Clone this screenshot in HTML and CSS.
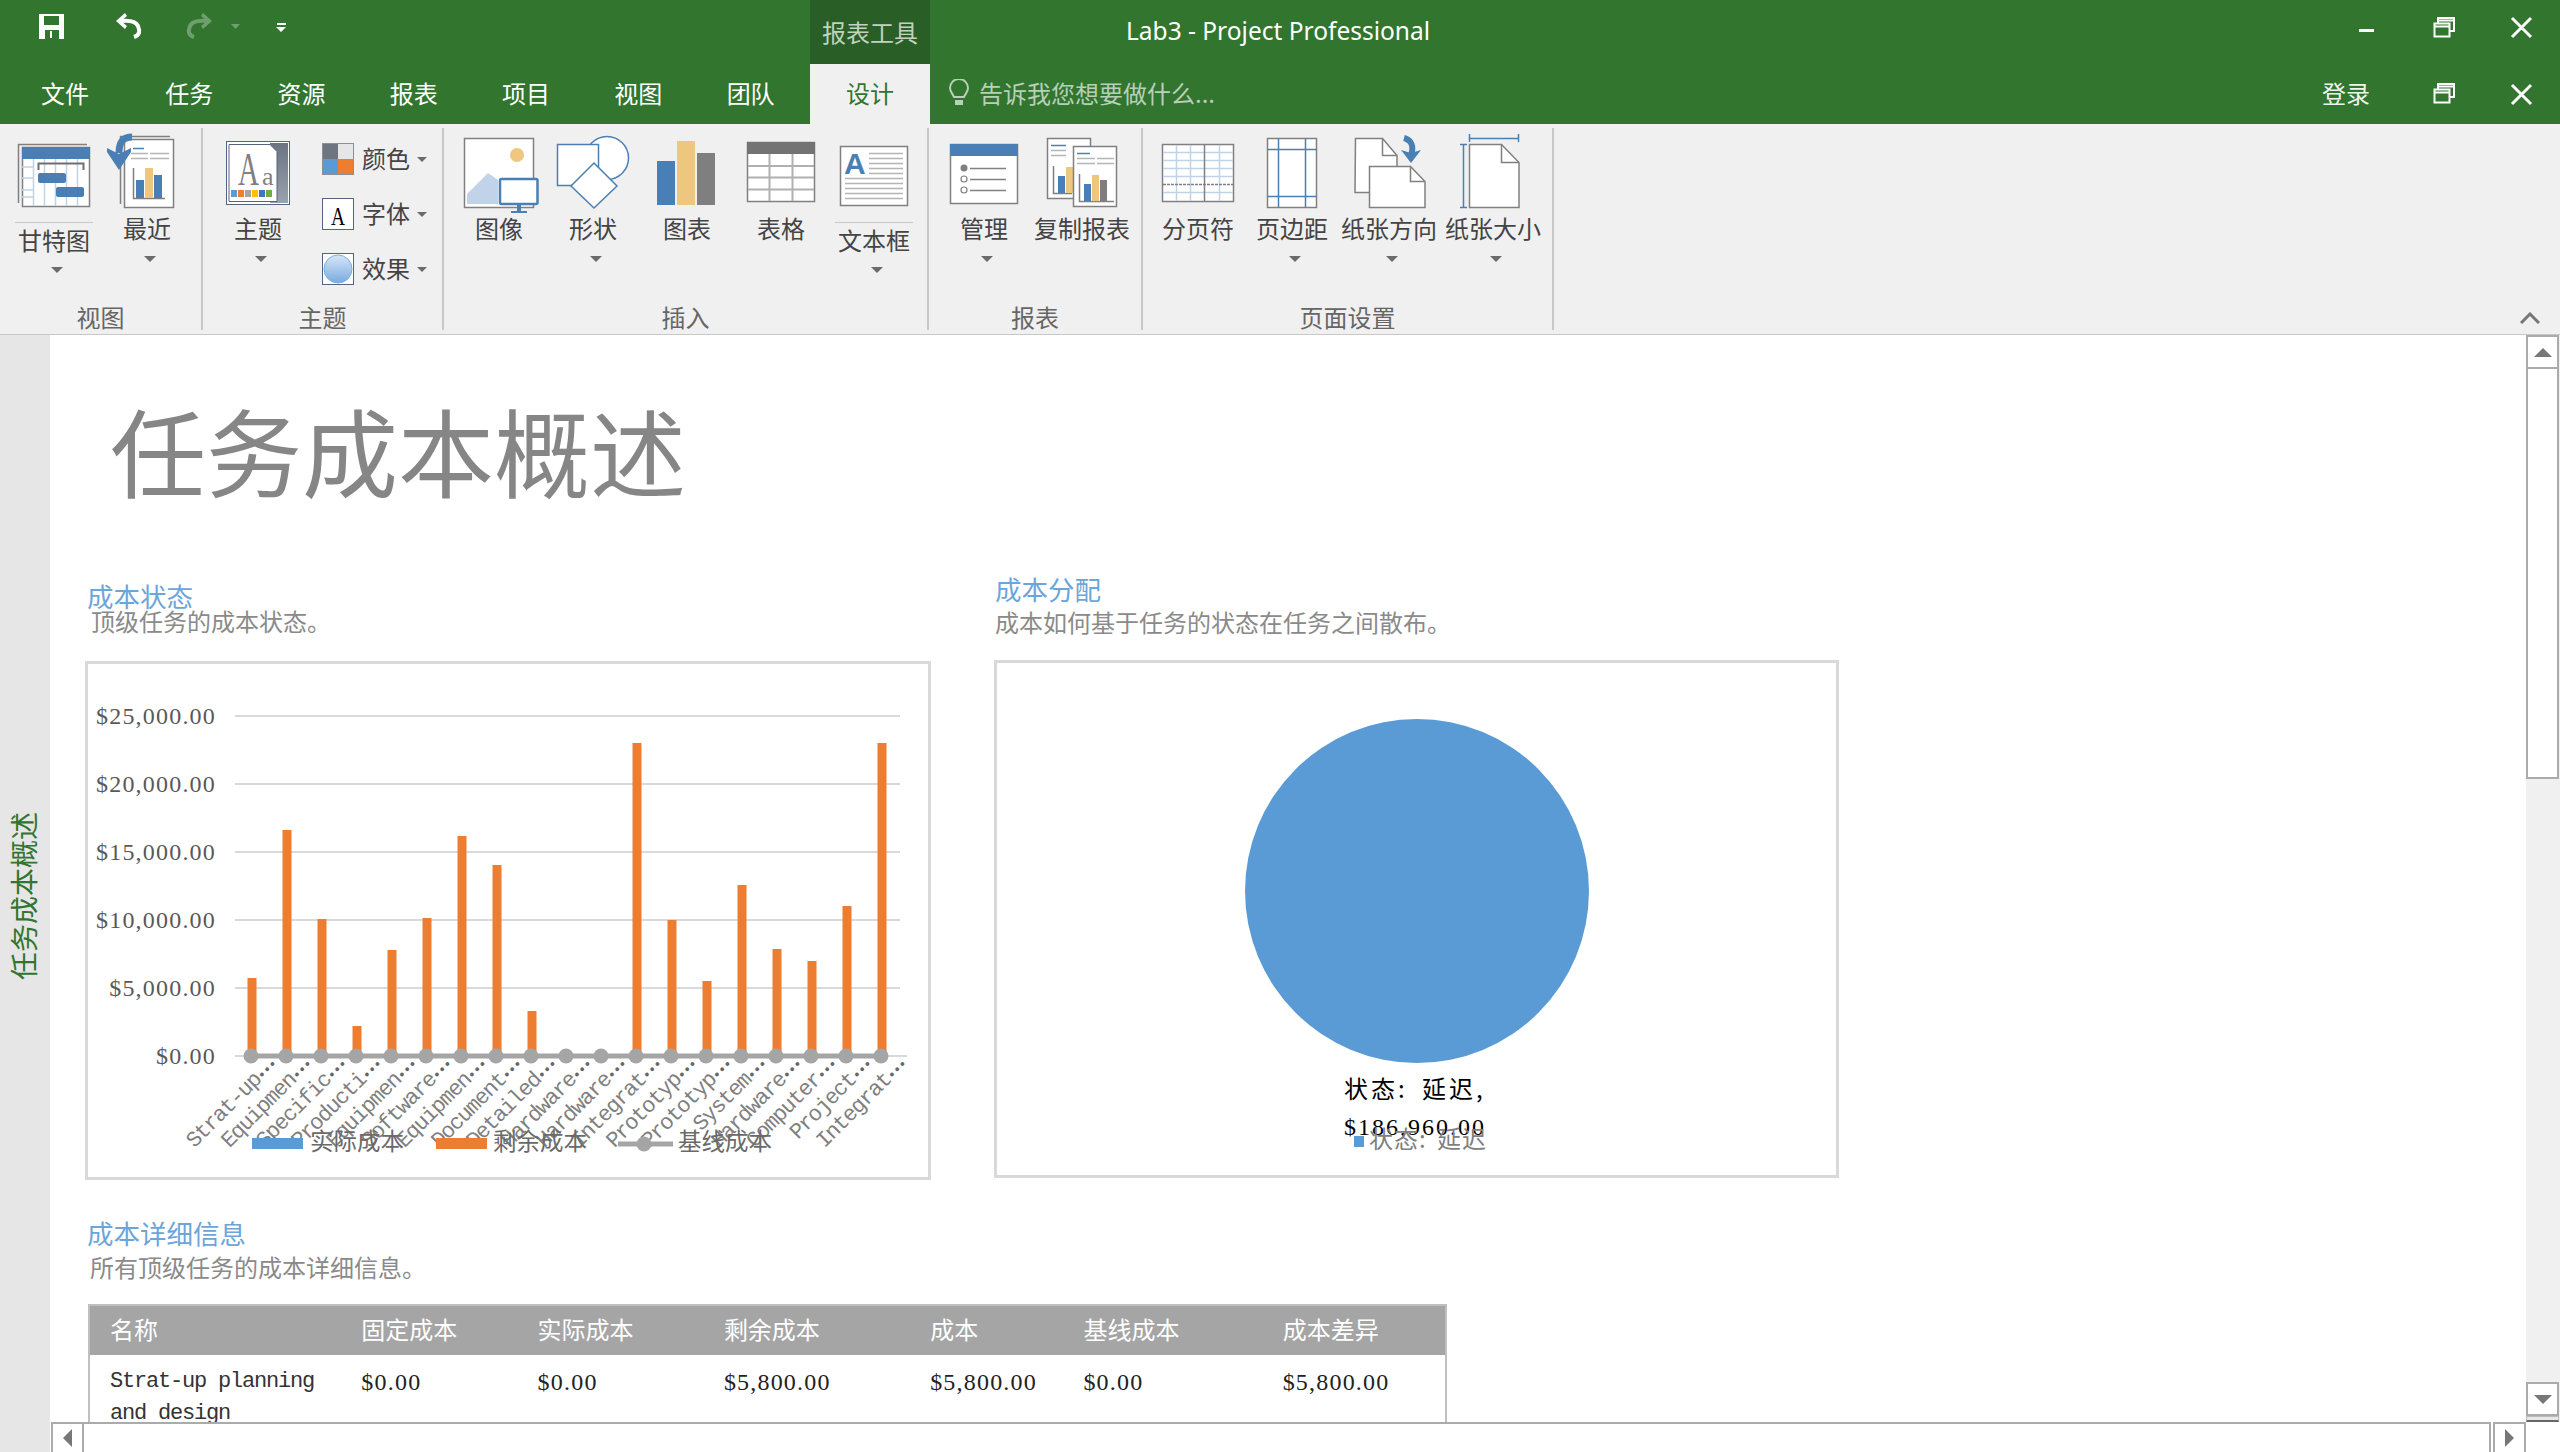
FILE: index.html
```html
<!DOCTYPE html>
<html lang="zh-CN">
<head>
<meta charset="utf-8">
<title>Lab3 - Project Professional</title>
<link rel="stylesheet" href="styles.css">
</head>
<body>
<div class="app">
  <header class="chrome">
    <div class="titlebar">
      <svg class="qat" viewBox="0 0 810 64" width="810" height="64">
        <path class="w" fill-rule="evenodd" d="M39 14h25v25H39z M44 16v9h15v-9z M45 30v9h14v-9z"/>
        <path class="w" d="M50 31h2v7h-2z"/>
        <path class="ws" d="M134 37c6-2 6-6 4-11-2-4-8-6-17-5"/>
        <path class="w" d="M116 21l9-8 2 3-6 5 6 5-2 3z"/>
        <g opacity=".3">
          <path class="ws" d="M194 37c-6-2-6-6-4-11 2-4 8-6 17-5"/>
          <path class="w" d="M212 21l-9-8-2 3 6 5-6 5 2 3z"/>
          <path class="w" d="M231 24h9l-4.500 5z"/>
        </g>
        <path class="w" d="M277 23h9v2h-9z M276 27h10l-5 5z"/>
      </svg>
      <div class="ctx-label">报表工具</div>
      <div class="doc-title">Lab3 - Project Professional</div>
      <svg class="wnd" viewBox="2330 0 230 64" width="230" height="64">
        <path class="w" d="M2359 29h15v3h-15z"/>
        <path class="wl" d="M2438 23v-5h16v13h-4"/><path class="wl" d="M2438 20.500h16"/><rect class="wl" x="2434.500" y="23.500" width="15" height="13"/><path class="wl" d="M2434.500 26.500h15"/>
        <path class="wx" d="M2512 18l19 19M2531 18l-19 19"/>
      </svg>
    </div>
    <nav class="tabs">
      <div class="tab tab-file">文件</div>
      <div class="tab">任务</div>
      <div class="tab">资源</div>
      <div class="tab">报表</div>
      <div class="tab">项目</div>
      <div class="tab">视图</div>
      <div class="tab">团队</div>
      <div class="tab tab-active">设计</div>
      <div class="tell">
        <svg class="bulb" viewBox="0 0 20 28" width="20" height="28"><path d="M5 18c-1-3-4-5-4-9a9 9 0 0 1 18 0c0 4-3 6-4 9z" fill="none" stroke="#b9cfb8" stroke-width="2"/><path d="M6 21h8v5H6z" fill="#b9cfb8"/></svg>
        <span>告诉我您想要做什么...</span>
      </div>
      <div class="login">登录</div>
      <svg class="wnd2" viewBox="2420 64 140 60" width="140" height="60">
        <path class="wl" d="M2438 89v-5h16v13h-4"/><path class="wl" d="M2438 86.500h16"/><rect class="wl" x="2434.500" y="89.500" width="15" height="13"/><path class="wl" d="M2434.500 92.500h15"/>
        <path class="wx" d="M2512 85l19 19M2531 85l-19 19"/>
      </svg>
    </nav>
  </header>

  <section class="ribbon">
    <div class="group g1">
      <div class="items">
        <div class="btn b78 split">
          <svg class="ic" viewBox="15 128 78 86" width="78" height="86">
            <path class="gl" d="M18.500 203V144.500H87"/>
            <rect class="sheet" x="22.500" y="147.500" width="67" height="59"/>
            <path class="lb" d="M33.500 159v47M44.500 159v47M55.500 159v47M66.500 159v47M77.500 159v47M22 167h11M22 178h11M22 190h11M22 197h11"/>
            <rect class="bl" x="22" y="147" width="68" height="12"/>
            <path class="gd" d="M38.500 170v-6.500h45v6.500"/>
            <rect class="bl" x="38" y="173" width="28" height="10" rx="2"/>
            <rect class="bl" x="56" y="187" width="28" height="10" rx="2"/>
          </svg>
          <div class="lbl">甘特图</div><i class="caret"></i>
        </div>
        <div class="btn b80">
          <svg class="ic" viewBox="107 128 80 86" width="80" height="86">
            <path class="gl" d="M120.500 204V136.500H170"/>
            <rect class="sheet" x="124.500" y="139.500" width="49" height="68"/>
            <path class="bls" d="M133 148.500h11"/>
            <path class="lg" d="M131 153.500h17M150 153.500h19M131 158.500h17M150 158.500h19"/>
            <path class="gl" d="M133.500 168v30.500H165"/>
            <rect class="bl" x="136" y="180" width="8" height="18"/><rect class="tn" x="145" y="168" width="8" height="30"/><rect class="bl" x="154" y="175" width="8" height="23"/>
            <path d="M132 137c-9 0-13 5-13 16" fill="none" stroke="#4a7fb5" stroke-width="7"/>
            <path class="bl" d="M107 148l12 6 12-6v4l-12 18-12-18z"/>
          </svg>
          <div class="lbl">最近</div><i class="caret"></i>
        </div>
      </div>
      <div class="glabel">视图</div>
    </div>

    <div class="group g2">
      <div class="items">
        <div class="btn b80">
          <svg class="ic" viewBox="218 128 80 86" width="80" height="86">
            <defs><linearGradient id="th" x1="0" y1="0" x2="0" y2="1"><stop offset="0" stop-color="#6b7380"/><stop offset="1" stop-color="#9aa2ae"/></linearGradient>
            <linearGradient id="ef" x1="0" y1="0" x2="0" y2="1"><stop offset="0" stop-color="#d6e6f7"/><stop offset="1" stop-color="#7aaae0"/></linearGradient></defs>
            <rect x="226.500" y="141.500" width="63" height="63" fill="#fff" stroke="#546380"/>
            <rect x="270" y="143" width="18" height="60" fill="url(#th)"/>
            <path d="M229 144.500h41l7 7v50h-48z" fill="#fff" stroke="#546380"/>
            <text class="aa" x="238" y="185" textLength="21" lengthAdjust="spacingAndGlyphs">A</text><text class="aa2" x="262" y="185">a</text>
            <rect x="231" y="190" width="6" height="7" fill="#5b9bd5"/><rect x="238" y="190" width="6" height="7" fill="#ed7d31"/><rect x="245" y="190" width="6" height="7" fill="#a5a5a5"/><rect x="252" y="190" width="6" height="7" fill="#ffc000"/><rect x="259" y="190" width="6" height="7" fill="#4472c4"/><rect x="266" y="190" width="6" height="7" fill="#70ad47"/>
          </svg>
          <div class="lbl">主题</div><i class="caret"></i>
        </div>
        <div class="small-col">
          <div class="small">
            <svg viewBox="0 0 32 32" width="32" height="32"><rect width="16" height="16" fill="#6f7580"/><rect x="16" width="16" height="16" fill="#e6e6e6"/><rect y="16" width="16" height="16" fill="#5b9bd5"/><rect x="16" y="16" width="16" height="16" fill="#ed7d31"/><rect x=".5" y=".5" width="31" height="31" fill="none" stroke="#8a8f98"/></svg>
            <span>颜色</span><i class="caret-s"></i>
          </div>
          <div class="small">
            <svg viewBox="0 0 32 32" width="32" height="32"><rect x=".5" y=".5" width="31" height="31" fill="#fff" stroke="#546380"/><text class="fa" x="9" y="27" textLength="14" lengthAdjust="spacingAndGlyphs">A</text></svg>
            <span>字体</span><i class="caret-s"></i>
          </div>
          <div class="small">
            <svg viewBox="0 0 32 32" width="32" height="32"><rect x=".5" y=".5" width="31" height="31" fill="#fff" stroke="#546380"/><circle cx="16" cy="16" r="14" fill="url(#ef)" stroke="#7faee0"/></svg>
            <span>效果</span><i class="caret-s"></i>
          </div>
        </div>
      </div>
      <div class="glabel">主题</div>
    </div>

    <div class="group g3">
      <div class="items">
        <div class="btn b80">
          <svg class="ic" viewBox="459 128 80 86" width="80" height="86">
            <rect class="sheet" x="464.500" y="138.500" width="69" height="69"/>
            <circle cx="517" cy="155" r="7" fill="#efc77f"/>
            <path d="M467 194l21-21 10 7v24h-31z" fill="#c0d3e8"/>
            <rect x="500" y="179" width="37.500" height="25" rx="1.500" fill="#fff" stroke="#4a7fb5" stroke-width="2.500"/>
            <path class="bl" d="M517 205h4v6h6v2h-16v-2h6z"/>
          </svg>
          <div class="lbl">图像</div>
        </div>
        <div class="btn b80">
          <svg class="ic" viewBox="553 128 80 86" width="80" height="86">
            <circle class="sh" cx="607" cy="158" r="21.500"/>
            <rect class="sh" x="557.500" y="144.500" width="41" height="41"/>
            <path class="sh" d="M594 163l23 23-23 22-23-22z"/>
          </svg>
          <div class="lbl">形状</div><i class="caret"></i>
        </div>
        <div class="btn b80">
          <svg class="ic" viewBox="647 128 80 86" width="80" height="86">
            <rect class="bl" x="657" y="161" width="18" height="44"/><rect class="tn" x="677" y="141" width="18" height="64"/><rect x="697" y="153" width="18" height="52" fill="#7f7f7f"/>
          </svg>
          <div class="lbl">图表</div>
        </div>
        <div class="btn b80">
          <svg class="ic" viewBox="741 128 80 86" width="80" height="86">
            <rect class="sheet" x="747.500" y="142.500" width="67" height="59"/>
            <path class="lg2" d="M769.500 154v47M792.500 154v47M748 166h66M748 177.500h66M748 189.500h66"/>
            <rect x="747" y="142" width="68" height="12" fill="#737373"/>
          </svg>
          <div class="lbl">表格</div>
        </div>
        <div class="btn b78 split">
          <svg class="ic" viewBox="835 128 78 86" width="78" height="86">
            <rect class="sheet" x="840.500" y="146.500" width="67" height="59"/>
            <text class="tba" x="844" y="174">A</text>
            <path class="lg" d="M869 153.500h34M869 158.500h34M869 163.500h34M869 168.500h34M869 173.500h34M845 178.500h58M845 183.500h58M845 188.500h58M845 193.500h58M845 198.500h58"/>
          </svg>
          <div class="lbl">文本框</div><i class="caret"></i>
        </div>
      </div>
      <div class="glabel">插入</div>
    </div>

    <div class="group g4">
      <div class="items">
        <div class="btn b80">
          <svg class="ic" viewBox="944 128 80 86" width="80" height="86">
            <rect class="sheet" x="950.500" y="144.500" width="67" height="59"/>
            <rect class="bl" x="950" y="144" width="68" height="12"/>
            <circle cx="964" cy="168" r="3.500" fill="#7f7f7f"/><circle class="hol" cx="964" cy="179" r="3"/><circle class="hol" cx="964" cy="190" r="3"/>
            <path class="gl" d="M970 168.500h36M970 179.500h36M970 190.500h36"/>
          </svg>
          <div class="lbl">管理</div><i class="caret"></i>
        </div>
        <div class="btn b100">
          <svg class="ic" viewBox="1032 128 100 86" width="100" height="86">
            <rect class="sheet" x="1047.500" y="138.500" width="43" height="60"/>
            <path class="bls" d="M1051 145.500h15"/><path class="lg" d="M1051 150.500h15M1051 155.500h15"/>
            <path class="gl" d="M1053.500 166v27.500H1072"/>
            <rect class="bl" x="1058" y="176" width="7" height="17"/><rect class="tn" x="1066" y="167" width="7" height="26"/>
            <rect class="sheet" x="1073.500" y="146.500" width="43" height="60"/>
            <path class="bls" d="M1077 153.500h13"/><path class="lg" d="M1077 158.500h18M1097 158.500h17M1077 163.500h18M1097 163.500h17"/>
            <path class="gl" d="M1079.500 174v27.500H1114"/>
            <rect class="bl" x="1084" y="184" width="7" height="17"/><rect class="tn" x="1092" y="175" width="7" height="26"/><rect x="1100" y="180" width="7" height="21" fill="#7f7f7f"/>
          </svg>
          <div class="lbl">复制报表</div>
        </div>
      </div>
      <div class="glabel">报表</div>
    </div>

    <div class="group g5">
      <div class="items">
        <div class="btn b80">
          <svg class="ic" viewBox="1158 128 80 86" width="80" height="86">
            <rect class="sheet" x="1162.500" y="144.500" width="71" height="57"/>
            <path class="lb" d="M1176.500 145v56M1190.500 145v56M1219.500 145v56M1163 152.500h70M1163 160.500h70M1163 168.500h70M1163 176.500h70M1163 192.500h70"/>
            <path class="gl" d="M1204.500 145v56"/>
            <path class="gl" stroke-dasharray="3 1" d="M1163 184.500h70"/>
          </svg>
          <div class="lbl">分页符</div>
        </div>
        <div class="btn b80">
          <svg class="ic" viewBox="1252 128 80 86" width="80" height="86">
            <rect class="sheet" x="1267.500" y="138.500" width="49" height="69"/>
            <path class="bls" d="M1278.500 139v68M1305.500 139v68M1268 149.500h48M1268 196.500h48"/>
          </svg>
          <div class="lbl">页边距</div><i class="caret"></i>
        </div>
        <div class="btn b100">
          <svg class="ic" viewBox="1339 128 100 86" width="100" height="86">
            <path class="sheet" d="M1355.500 138.500h27l14.500 17v37h-42z"/><path class="gl" d="M1382.500 139v16.500h14"/>
            <path class="sheet" d="M1369.500 166.500h41l14.500 15v26h-55.500z"/><path class="gl" d="M1410.500 167v14.500h14"/>
            <path d="M1404 138c8 2 10 9 7 17" fill="none" stroke="#4a7fb5" stroke-width="6"/>
            <path class="bl" d="M1401 150l10 3 10-3-10 13z"/>
          </svg>
          <div class="lbl">纸张方向</div><i class="caret"></i>
        </div>
        <div class="btn b100">
          <svg class="ic" viewBox="1443 128 100 86" width="100" height="86">
            <path class="sheet" d="M1469.500 144.500h32l17.500 18v45h-49.500z"/><path class="gl" d="M1501.500 145v17.500h17"/>
            <path class="bls" d="M1469.500 134v8M1518.500 134v8M1470 138.500h48M1460 144.500h7M1460 207.500h7M1463.500 145v62"/>
          </svg>
          <div class="lbl">纸张大小</div><i class="caret"></i>
        </div>
      </div>
      <div class="glabel">页面设置</div>
    </div>

    <svg class="collapse" viewBox="0 0 20 12" width="20" height="12"><path d="M1 11l9-9 9 9" fill="none" stroke="#777" stroke-width="3"/></svg>
  </section>

  <div class="workspace">
    <aside class="viewbar"><span>任务成本概述</span></aside>
    <div class="pane">
      <main class="report">
        <h1 class="rtitle">任务成本概述</h1>
        <div class="charts">
          <section class="col col-a">
            <h2 class="head">成本状态</h2>
            <p class="sub">顶级任务的成本状态。</p>
            <div class="box">
              <svg viewBox="88 664 840 513" width="840" height="513">
                <path class="grid" d="M235 716h665M235 784h665M235 852h665M235 920h665M235 988h665M235 1056h672"/>
                <text class="yt" x="216" y="724">$25,000.00</text>
                <text class="yt" x="216" y="792">$20,000.00</text>
                <text class="yt" x="216" y="860">$15,000.00</text>
                <text class="yt" x="216" y="928">$10,000.00</text>
                <text class="yt" x="216" y="996">$5,000.00</text>
                <text class="yt" x="216" y="1064">$0.00</text>
                <g class="bars">
                  <rect x="247.500" y="978" width="9" height="78"/><rect x="282.500" y="830" width="9" height="226"/><rect x="317.500" y="919" width="9" height="137"/><rect x="352.500" y="1026" width="9" height="30"/><rect x="387.500" y="950" width="9" height="106"/><rect x="422.500" y="918" width="9" height="138"/><rect x="457.500" y="836" width="9" height="220"/><rect x="492.500" y="865" width="9" height="191"/><rect x="527.500" y="1011" width="9" height="45"/><rect x="632.500" y="743" width="9" height="313"/><rect x="667.500" y="920" width="9" height="136"/><rect x="702.500" y="981" width="9" height="75"/><rect x="737.500" y="885" width="9" height="171"/><rect x="772.500" y="949" width="9" height="107"/><rect x="807.500" y="961" width="9" height="95"/><rect x="842.500" y="906" width="9" height="150"/><rect x="877.500" y="743" width="9" height="313"/>
                </g>
                <path class="base" d="M251 1056h630"/>
                <g class="dots">
                  <circle cx="251" cy="1056" r="7.500"/><circle cx="286" cy="1056" r="7.500"/><circle cx="321" cy="1056" r="7.500"/><circle cx="356" cy="1056" r="7.500"/><circle cx="391" cy="1056" r="7.500"/><circle cx="426" cy="1056" r="7.500"/><circle cx="461" cy="1056" r="7.500"/><circle cx="496" cy="1056" r="7.500"/><circle cx="531" cy="1056" r="7.500"/><circle cx="566" cy="1056" r="7.500"/><circle cx="601" cy="1056" r="7.500"/><circle cx="636" cy="1056" r="7.500"/><circle cx="671" cy="1056" r="7.500"/><circle cx="706" cy="1056" r="7.500"/><circle cx="741" cy="1056" r="7.500"/><circle cx="776" cy="1056" r="7.500"/><circle cx="811" cy="1056" r="7.500"/><circle cx="846" cy="1056" r="7.500"/><circle cx="881" cy="1056" r="7.500"/>
                </g>
                <g class="xt" transform="translate(4 -3)">
                  <text transform="rotate(-45 274 1068)" x="274" y="1068">Strat-up<tspan class="el">•••</tspan></text>
                  <text transform="rotate(-45 309 1068)" x="309" y="1068">Equipmen<tspan class="el">•••</tspan></text>
                  <text transform="rotate(-45 344 1068)" x="344" y="1068">Specific<tspan class="el">•••</tspan></text>
                  <text transform="rotate(-45 379 1068)" x="379" y="1068">Producti<tspan class="el">•••</tspan></text>
                  <text transform="rotate(-45 414 1068)" x="414" y="1068">Equipmen<tspan class="el">•••</tspan></text>
                  <text transform="rotate(-45 449 1068)" x="449" y="1068">Software<tspan class="el">•••</tspan></text>
                  <text transform="rotate(-45 484 1068)" x="484" y="1068">Equipmen<tspan class="el">•••</tspan></text>
                  <text transform="rotate(-45 519 1068)" x="519" y="1068">Document<tspan class="el">•••</tspan></text>
                  <text transform="rotate(-45 554 1068)" x="554" y="1068">Detailed<tspan class="el">•••</tspan></text>
                  <text transform="rotate(-45 589 1068)" x="589" y="1068">Hardware<tspan class="el">•••</tspan></text>
                  <text transform="rotate(-45 624 1068)" x="624" y="1068">Hardware<tspan class="el">•••</tspan></text>
                  <text transform="rotate(-45 659 1068)" x="659" y="1068">Integrat<tspan class="el">•••</tspan></text>
                  <text transform="rotate(-45 694 1068)" x="694" y="1068">Prototyp<tspan class="el">•••</tspan></text>
                  <text transform="rotate(-45 729 1068)" x="729" y="1068">Prototyp<tspan class="el">•••</tspan></text>
                  <text transform="rotate(-45 764 1068)" x="764" y="1068">System<tspan class="el">•••</tspan></text>
                  <text transform="rotate(-45 799 1068)" x="799" y="1068">Hardware<tspan class="el">•••</tspan></text>
                  <text transform="rotate(-45 834 1068)" x="834" y="1068">Computer<tspan class="el">•••</tspan></text>
                  <text transform="rotate(-45 869 1068)" x="869" y="1068">Project<tspan class="el">•••</tspan></text>
                  <text transform="rotate(-45 904 1068)" x="904" y="1068">Integrat<tspan class="el">•••</tspan></text>
                </g>
                <rect x="252" y="1138" width="51" height="11" fill="#5b9bd5"/>
                <text class="leg" x="310" y="1150">实际成本</text>
                <rect x="436" y="1138" width="51" height="11" fill="#ed7d31"/>
                <text class="leg" x="493" y="1150">剩余成本</text>
                <path class="base" d="M618 1144h55"/><circle class="dot1" cx="644" cy="1144" r="7.500"/>
                <text class="leg" x="678" y="1150">基线成本</text>
              </svg>
            </div>
          </section>
          <section class="col col-b">
            <h2 class="head">成本分配</h2>
            <p class="sub">成本如何基于任务的状态在任务之间散布。</p>
            <div class="box">
              <svg viewBox="997 663 840 512" width="840" height="512">
                <circle cx="1417" cy="891" r="172" fill="#5b9bd5"/>
                <text class="plab" x="1344" y="1098">状态: 延迟,</text>
                <text class="pnum" x="1344" y="1135">$186,960.00</text>
                <rect x="1354" y="1136" width="10" height="11" fill="#5b9bd5"/>
                <text class="pleg" x="1369" y="1148">状态: 延迟</text>
              </svg>
            </div>
          </section>
        </div>
        <section class="detail">
          <h2 class="head">成本详细信息</h2>
          <p class="sub">所有顶级任务的成本详细信息。</p>
          <table class="tbl">
            <colgroup><col class="c1"><col class="c2"><col class="c3"><col class="c4"><col class="c5"><col class="c6"><col class="c7"></colgroup>
            <thead><tr><th>名称</th><th>固定成本</th><th>实际成本</th><th>剩余成本</th><th>成本</th><th>基线成本</th><th>成本差异</th></tr></thead>
            <tbody><tr><td class="name">Strat-up planning and design</td><td>$0.00</td><td>$0.00</td><td>$5,800.00</td><td>$5,800.00</td><td>$0.00</td><td>$5,800.00</td></tr></tbody>
          </table>
        </section>
      </main>
      <div class="vbar">
        <div class="sb-btn"><i class="tri-up"></i></div>
        <div class="sb-thumb"></div>
        <div class="sb-track"></div>
        <div class="sb-btn"><i class="tri-down"></i></div>
        <div class="sb-grip"></div>
      </div>
      <div class="hbar">
        <div class="sb-hbtn"><i class="tri-left"></i></div>
        <div class="sb-hthumb"></div>
        <div class="sb-hbtn"><i class="tri-right"></i></div>
      </div>
      <div class="corner"></div>
    </div>
  </div>
</div>
</body>
</html>
```
FILE: styles.css
```css
* { box-sizing: border-box; }
html, body { margin: 0; padding: 0; }
body { width: 2560px; height: 1452px; overflow: hidden; background: #fff; font-family: "Noto Sans CJK SC", "Noto Sans", sans-serif; font-size: 24px; color: #444; }
i { display: block; }
.app { display: flex; flex-direction: column; height: 1452px; }

/* title bar + tabs */
.chrome { background: #31752f; color: #fff; height: 124px; flex: none; }
.titlebar { display: flex; height: 64px; }
.qat { flex: none; }
.w { fill: #fff; }
.ws { fill: none; stroke: #fff; stroke-width: 4; }
.wl { fill: none; stroke: #fff; stroke-width: 2; }
.wx { fill: none; stroke: #fff; stroke-width: 3; }
.ctx-label { width: 120px; flex: none; background: #295e27; color: #c0d3be; text-align: center; line-height: 63px; font-size: 24px; }
.doc-title { font-family: "Noto Sans", sans-serif; font-size: 24.500px; line-height: 62px; margin-left: 196px; white-space: nowrap; }
.wnd { margin-left: auto; flex: none; }
.tabs { display: flex; height: 60px; align-items: stretch; }
.tab { width: 112.300px; text-align: center; line-height: 57px; font-size: 24px; flex: none; color: #fff; }
.tab-file { width: 130px; margin-right: 3px; }
.tab-active { width: 120px; margin-left: 3.200px; background: #f0f0f0; color: #31752f; }
.tell { display: flex; align-items: center; gap: 10px; margin-left: 19px; padding-bottom: 3px; color: #b9cfb8; font-size: 24px; }
.bulb { flex: none; }
.login { margin-left: auto; line-height: 57px; color: #eef4ee; }
.wnd2 { flex: none; margin-left: 50px; }

/* ribbon */
.ribbon { height: 211px; flex: none; background: #f0f0f0; border-bottom: 1px solid #c8c8c8; display: flex; align-items: flex-start; padding-top: 4px; }
.group { height: 202px; display: flex; flex-direction: column; border-right: 2px solid #c8c8c8; flex: none; padding-left: 15px; }
.g1 { width: 203px; }
.g2 { width: 241px; }
.g3 { width: 485px; }
.g4 { width: 214px; }
.g5 { width: 411px; }
.items { display: flex; flex: 1; align-items: flex-start; }
.g1 .items { gap: 14px; }
.g2 .items { gap: 24px; }
.g3 .items { gap: 14px; }
.g4 .items { gap: 8px; }
.g5 .items { gap: 14px; }
.g5 .btn:nth-child(3) { margin-left: -7px; }
.g5 .btn:nth-child(4) { margin-left: -10px; }
.glabel { line-height: 25px; height: 26px; text-align: center; font-size: 24px; color: #666; margin-left: -15px; }
.btn { display: flex; flex-direction: column; align-items: center; flex: none; }
.b78 { width: 78px; }
.b80 { width: 80px; }
.b100 { width: 100px; }
.ic { display: block; flex: none; overflow: visible; }
.lbl { line-height: 28px; height: 32px; font-size: 24px; color: #444; white-space: nowrap; }
.split .lbl { margin-top: 8px; padding-top: 3px; height: 35px; width: 100%; text-align: center; border-top: 1px solid #c8c8c8; }
.caret { width: 0; height: 0; border-left: 6px solid transparent; border-right: 6px solid transparent; border-top: 6px solid #6b6b6b; margin-top: 10px; margin-left: 6px; }
.small-col { display: flex; flex-direction: column; gap: 23px; margin-top: 15px; }
.small { display: flex; align-items: center; height: 32px; }
.small svg { flex: none; margin-right: 8px; }
.small span { line-height: 29px; padding-bottom: 3px; color: #444; }
.caret-s { width: 0; height: 0; border-left: 5px solid transparent; border-right: 5px solid transparent; border-top: 5px solid #6b6b6b; margin-left: 7px; }
.collapse { margin-left: auto; margin-right: 20px; margin-top: 184px; flex: none; }

/* icon paints */
.sheet { fill: #fff; stroke: #808080; stroke-width: 1.500; }
.gl { fill: none; stroke: #808080; stroke-width: 1.500; }
.gd { fill: none; stroke: #6f6f6f; stroke-width: 2; }
.lg { fill: none; stroke: #b5b5b5; stroke-width: 1.500; }
.lg2 { fill: none; stroke: #b0b0b0; stroke-width: 2; }
.lb { fill: none; stroke: #c0d3e8; stroke-width: 1.500; }
.bl { fill: #4a7fb5; }
.tn { fill: #eec77e; }
.bls { fill: none; stroke: #4a7fb5; stroke-width: 1.500; }
.sh { fill: #fff; stroke: #4a7fb5; stroke-width: 1.500; }
.hol { fill: #fff; stroke: #7f7f7f; stroke-width: 1.200; }
.aa { font-family: "Liberation Serif", serif; font-size: 46px; fill: #808080; }
.aa2 { font-family: "Liberation Serif", serif; font-size: 26px; fill: #808080; }
.fa { font-family: "Liberation Serif", serif; font-size: 26px; fill: #000; }
.tba { font-family: "Liberation Sans", sans-serif; font-size: 30px; font-weight: 700; fill: #4a7fb5; }

/* workspace */
.workspace { flex: 1; display: flex; min-height: 0; }
.viewbar { width: 50px; flex: none; background: #e6e6e6; display: flex; align-items: center; justify-content: center; }
.viewbar span { writing-mode: vertical-rl; text-orientation: sideways; transform: rotate(180deg); font-size: 28px; color: #31752f; margin-right: 4px; margin-top: 6px; }
.pane { flex: 1; min-width: 0; display: grid; grid-template-columns: 1fr 34px; grid-template-rows: 1fr 30px; }
.report { overflow: hidden; padding-left: 35px; background: #fff; min-width: 0; min-height: 0; }

.rtitle { margin: 59px 0 0 25px; font-size: 96px; line-height: 110px; font-weight: 400; color: #868686; height: 110px; }
.charts { display: flex; gap: 63px; margin-top: 70px; align-items: flex-start; }
.col { width: 845px; flex: none; }
.col-a { margin-right: 1px; }
.head { margin: 0; font-size: 26.500px; font-weight: 400; line-height: 30px; color: #6ba5da; }
.sub { margin: 0; font-size: 24px; line-height: 24px; font-weight: 400; color: #8a8a8a; }
.box { border: 3px solid #d9d9d9; background: #fff; overflow: hidden; }
.box svg { display: block; }
.col-a .head { margin-top: 7px; padding-left: 2px; }
.col-a .sub { margin-top: -2px; padding-left: 6px; }
.col-a .box { margin-top: 28px; height: 519px; width: 846px; }
.col-b .head { padding-left: 1px; }
.col-b .sub { margin-top: 6px; padding-left: 1px; }
.col-b .box { margin-top: 26px; height: 518px; }

.grid { fill: none; stroke: #d9d9d9; stroke-width: 2; }
.bars { fill: #ed7d31; }
.base { fill: none; stroke: #a5a5a5; stroke-width: 5; }
.dots, .dot1 { fill: #a5a5a5; }
.yt { font-family: "Liberation Serif", serif; font-size: 24px; letter-spacing: 1.200px; fill: #595959; text-anchor: end; }
.xt { font-family: "Liberation Mono", monospace; font-size: 22px; letter-spacing: -1.200px; fill: #808080; text-anchor: end; }
.el { font-size: 14px; letter-spacing: -1px; fill: #666; }
.leg { font-size: 23.500px; font-weight: 400; fill: #6a6a6a; }
.plab { font-size: 24px; font-weight: 400; fill: #000; letter-spacing: 3px; word-spacing: 6px; }
.pnum { font-family: "Liberation Serif", serif; font-size: 24px; letter-spacing: 2px; fill: #000; }
.pleg { font-size: 24px; font-weight: 400; fill: #7f7f7f; letter-spacing: 1px; word-spacing: 4px; }

.detail { margin-top: 38px; }
.detail .head { padding-left: 2px; }
.detail .sub { margin-top: 7px; padding-left: 5px; }
.tbl { margin: 25px 0 0 3px; border-collapse: collapse; table-layout: fixed; width: 1359px; border: 2px solid #bfbfbf; }
.c1 { width: 252px; } .c2 { width: 176px; } .c3 { width: 186px; } .c4 { width: 206px; } .c5 { width: 153px; } .c6 { width: 199px; } .c7 { width: 183px; }
.tbl th { background: #a5a5a5; color: #fff; font-weight: 400; font-size: 24px; line-height: 32px; height: 50px; padding: 0 0 4px 20px; text-align: left; }
.tbl td { font-family: "Liberation Serif", serif; letter-spacing: 1.200px; font-size: 24px; line-height: 32px; color: #222; padding: 11px 0 0 20px; vertical-align: top; }
.tbl td.name { font-family: "Liberation Mono", monospace; font-size: 22px; letter-spacing: -1.200px; padding-right: 10px; color: #333; }

/* scrollbars */
.vbar { display: flex; flex-direction: column; background: #f0f0f0; padding-right: 1px; grid-row: 1; grid-column: 2; }
.sb-btn { height: 34px; flex: none; background: #fff; border: 2px solid #ababab; display: flex; align-items: center; justify-content: center; }
.sb-thumb { height: 410px; flex: none; background: #fff; border: 2px solid #ababab; border-top: 0; }
.sb-track { flex: 1; }
.sb-grip { height: 6px; flex: none; background: #e8e8e8; border: 1px solid #bbb; border-bottom: 2px solid #666; }
.tri-up { width: 0; height: 0; border-left: 9px solid transparent; border-right: 9px solid transparent; border-bottom: 9px solid #777; }
.tri-down { width: 0; height: 0; border-left: 9px solid transparent; border-right: 9px solid transparent; border-top: 9px solid #777; }
.hbar { display: flex; grid-row: 2; grid-column: 1; padding-left: 1px; background: #fff; }
.sb-hbtn { width: 33px; flex: none; border: 2px solid #ababab; border-bottom: 0; display: flex; align-items: center; justify-content: center; background: #fff; }
.sb-hthumb { flex: 1; border-top: 2px solid #ababab; border-right: 2px solid #ababab; margin-right: 2px; }
.tri-left { width: 0; height: 0; border-top: 9px solid transparent; border-bottom: 9px solid transparent; border-right: 9px solid #777; }
.tri-right { width: 0; height: 0; border-top: 9px solid transparent; border-bottom: 9px solid transparent; border-left: 9px solid #777; }
.corner { grid-row: 2; grid-column: 2; background: #fff; }
```
